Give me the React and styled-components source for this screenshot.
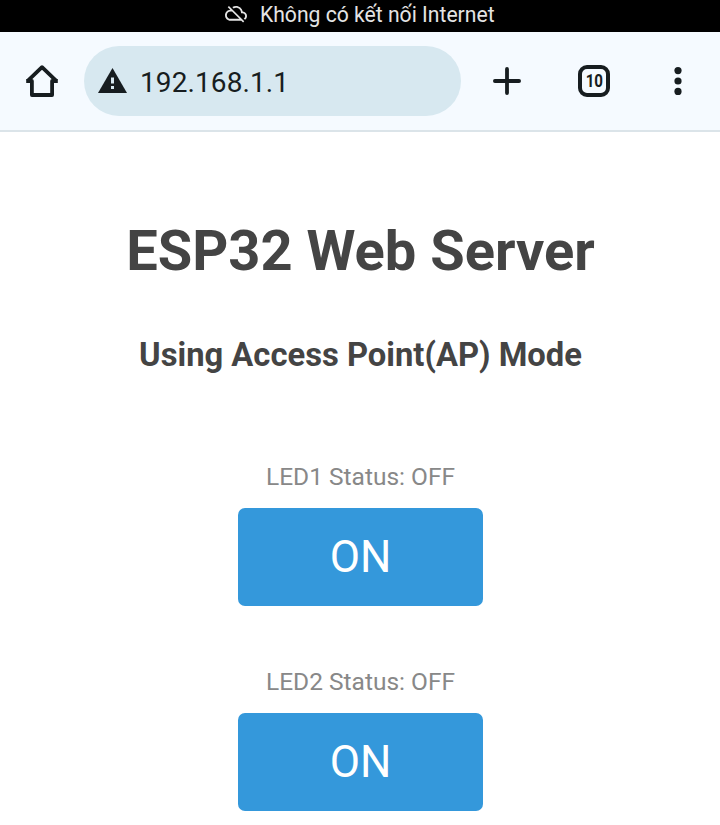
import React from "react";
import styled, { createGlobalStyle } from "styled-components";

const GlobalStyle = createGlobalStyle`
  * { box-sizing: border-box; }
  body { margin: 0; background: #fff; font-family: Roboto, sans-serif; overflow: hidden; }
`;
const Screen = styled.div`
  width: 720px; height: 825px; display: flex; flex-direction: column; overflow: hidden; background: #fff;
`;
const StatusBar = styled.div`
  height: 32px; flex: none; display: flex; align-items: center; justify-content: center; gap: 12.5px;
  padding-bottom: 3px; background: #000; color: #e4e4e4; font-size: 21.15px; line-height: 26px;
`;
const Toolbar = styled.header`
  height: 100px; flex: none; display: flex; align-items: center; padding-left: 24px;
  background: #f5faff; border-bottom: 2px solid #dbe4e9; color: #171d20;
`;
const AddressBar = styled.div`
  width: 377px; height: 70px; margin-left: 24px; padding-left: 14px; border-radius: 35px;
  display: flex; align-items: center; gap: 13px; background: #d7e8f0; font-size: 28px; letter-spacing: 0.1px;
`;
const Address = styled.span`
  padding-top: 2px;
`;
const Icon = styled.svg`
  display: block; flex: none; margin-left: ${(p) => p.$left || 0}px;
`;
const TabCount = styled.div`
  width: 32px; height: 32px; margin-left: 57px; border: 4px solid #171d20; border-radius: 9px;
  display: flex; align-items: center; justify-content: center; font: 700 18px/1 Roboto, sans-serif;
`;
const TabNumber = styled.span`
  transform: scaleX(0.84);
`;
const Page = styled.main`
  display: flex; flex-direction: column; align-items: center; color: #444; text-align: center;
`;
const Title = styled.h1`
  margin: 85px 0 0; padding-left: 1px; font-size: 56px; line-height: 68px; font-weight: 700;
`;
const Subtitle = styled.h3`
  margin: 50px 0 80px; padding-left: 1px; font-size: 32.76px; line-height: 40px; font-weight: 700;
`;
const Led = styled.section`
  height: 205px; display: flex; flex-direction: column; align-items: center;
`;
const LedStatus = styled.p`
  margin: 6px 0 15px; padding-left: 1px; color: #888; font-size: 24.5px; line-height: 32px;
`;
const LedButton = styled.button`
  width: 245px; height: 98px; border: 0; border-radius: 7px; padding: 0 0 0 1px;
  background: #3498db; color: #fff; font: 400 44px/1 Roboto, sans-serif;
`;

export default function App() {
  return (
    <Screen>
      <GlobalStyle />
      <StatusBar>
        <Icon width="22" height="20" viewBox="0 2.9 24 21.8" fill="currentColor">
          <path d="M19.350 10.040C18.670 6.590 15.640 4 12 4c-1.480 0-2.850.43-4.010 1.170l1.460 1.460C10.210 6.230 11.080 6 12 6c3.040 0 5.500 2.460 5.500 5.500v.5H19c1.660 0 3 1.340 3 3 0 1.130-.64 2.110-1.560 2.620l1.450 1.450C23.160 18.160 24 16.680 24 15c0-2.640-2.050-4.780-4.650-4.960zM3 5.270l2.750 2.740C2.560 8.150 0 10.770 0 14c0 3.310 2.690 6 6 6h11.730l2 2L21 20.730 4.270 4 3 5.270zM7.730 10l8 8H6c-2.210 0-4-1.790-4-4s1.790-4 4-4h1.730z" />
        </Icon>
        <span>Không có kết nối Internet</span>
      </StatusBar>
      <Toolbar>
        <Icon width="36" height="36" viewBox="0 0 36 36" fill="none" stroke="currentColor" strokeWidth="3.8" strokeLinejoin="round">
          <path d="M3.200 18.400 18 4.200 32.800 18.400M2.200 18H7.900V32H28.100V18H33.800" />
        </Icon>
        <AddressBar>
          <Icon width="29" height="26" viewBox="0 0 29 26">
            <path d="M14.500 0 29 25H0Z" fill="currentColor" />
            <path d="M13 9.500h3v6h-3zM13 18h3v3h-3z" fill="#d7e8f0" />
          </Icon>
          <Address>192.168.1.1</Address>
        </AddressBar>
        <Icon $left={32} width="28" height="28" viewBox="0 0 28 28" stroke="currentColor" strokeWidth="3.8" strokeLinecap="round">
          <path d="M14 1.900V26.100M1.900 14H26.100" />
        </Icon>
        <TabCount><TabNumber>10</TabNumber></TabCount>
        <Icon $left={64} width="8" height="28" viewBox="0 0 8 28" fill="currentColor">
          <circle cx="4" cy="3.600" r="3.600" /><circle cx="4" cy="14" r="3.600" /><circle cx="4" cy="24.400" r="3.600" />
        </Icon>
      </Toolbar>
      <Page>
        <Title>ESP32 Web Server</Title>
        <Subtitle>Using Access Point(AP) Mode</Subtitle>
        <Led><LedStatus>LED1 Status: OFF</LedStatus><LedButton>ON</LedButton></Led>
        <Led><LedStatus>LED2 Status: OFF</LedStatus><LedButton>ON</LedButton></Led>
      </Page>
    </Screen>
  );
}
